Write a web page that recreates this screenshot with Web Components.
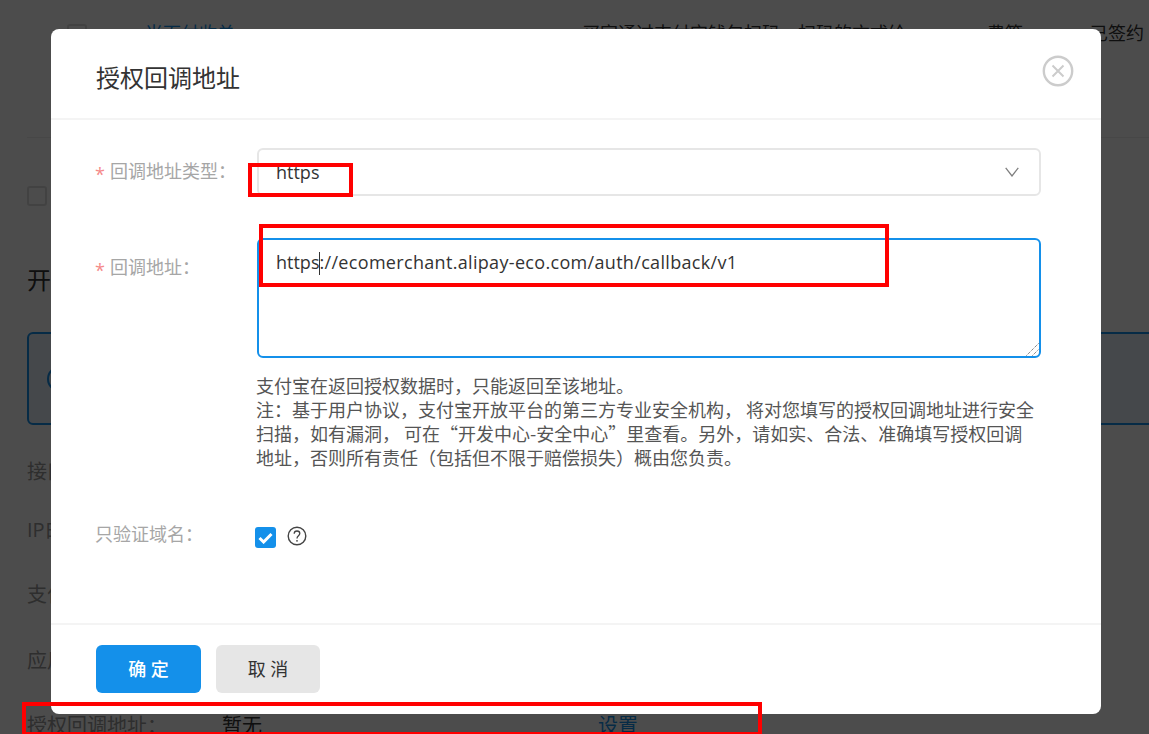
<!DOCTYPE html>
<html lang="zh">
<head>
<meta charset="utf-8">
<title>授权回调地址</title>
<style>
    html, body { margin: 0; height: 100%; overflow: hidden; background: #fff; }
    body { font: 18px/24px "Open Sans", "Noto Sans CJK SC", sans-serif; color: #333; }
</style>
</head>
<body>

<x-page>
    <x-order-row></x-order-row>
    <x-page-head></x-page-head>
    <x-data-row top="35" label="接口加签方式："></x-data-row>
    <x-data-row top="34" label="IP白名单："></x-data-row>
    <x-data-row top="41" label="支付宝网关地址："></x-data-row>
    <x-data-row top="42" label="应用网关地址："></x-data-row>
    <x-data-row top="41" label="授权回调地址：" value="暂无" action="设置"></x-data-row>
</x-page>

<x-modal heading="授权回调地址">
    <x-form-item label="回调地址类型：" required height="48">
        <x-select>https</x-select>
    </x-form-item>
    <x-form-item label="回调地址：" required offset="17" gap="42">
        <x-text-box caret="5">https://ecomerchant.alipay-eco.com/auth/callback/v1</x-text-box>
        <x-hint>支付宝在返回授权数据时，只能返回至该地址。<br>注：基于用户协议，支付宝开放平台的第三方专业安全机构， 将对您填写的授权回调地址进行安全扫描，如有漏洞， 可在“开发中心-安全中心”里查看。另外，请如实、合法、准确填写授权回调地址，否则所有责任（包括但不限于赔偿损失）概由您负责。</x-hint>
    </x-form-item>
    <x-form-item label="只验证域名：" offset="0" gap="53">
        <x-check-help></x-check-help>
    </x-form-item>
    <x-button slot="footer" kind="primary">确 定</x-button>
    <x-button slot="footer">取 消</x-button>
</x-modal>

<x-mark style="left:248px;top:163px;width:105px;height:34px"></x-mark>
<x-mark style="left:259px;top:224px;width:630px;height:63px"></x-mark>
<x-mark style="left:22px;top:702px;width:740px;height:34px"></x-mark>

<script>
class Page extends HTMLElement {
    constructor() {
        super();
        this.attachShadow({ mode: 'open' }).innerHTML = `<style>
            :host { display: block; height: 734px; padding: 0 0 0 27px; box-sizing: border-box; overflow: hidden; }
        </style><slot></slot>`;
    }
}

class OrderRow extends HTMLElement {
    constructor() {
        super();
        this.attachShadow({ mode: 'open' }).innerHTML = `<style>
            :host { display: block; height: 138px; box-sizing: border-box; padding-top: 21px; border-bottom: 1px solid #eee; }
            .row { display: flex; line-height: 24px; white-space: nowrap; color: #333; }
            .box { width: 20px; height: 20px; margin: 3px 58px 0 40px; box-sizing: border-box; border: 2px solid #ddd; border-radius: 3px; }
            .name { width: 437px; color: #1490ea; }
            .desc { width: 405px; }
            .fee { width: 103px; }
        </style>
        <div class="row">
            <div class="box"></div>
            <div class="name">当面付收单</div>
            <div class="desc">买家通过支付宝钱包扫码，扫码的方式给</div>
            <div class="fee">费等</div>
            <div>已签约</div>
        </div>`;
    }
}

class PageHead extends HTMLElement {
    constructor() {
        super();
        this.attachShadow({ mode: 'open' }).innerHTML = `<style>
            :host { display: block; padding-top: 48px; }
            .box { width: 20px; height: 20px; box-sizing: border-box; border: 2px solid #ddd; border-radius: 3px; }
            h2 { margin: 58px 0 0; font: inherit; font-size: 24px; line-height: 32px; color: #333; }
            .info { display: flex; align-items: center; width: 1180px; height: 93px; margin-top: 36px; padding-left: 18px; box-sizing: border-box; background: #e6f0fa; border: 2px solid #1490ea; border-radius: 6px; }
            .dot { width: 26px; height: 26px; box-sizing: border-box; border: 2px solid #1490ea; border-radius: 50%; }
        </style>
        <div class="box"></div>
        <h2>开发信息</h2>
        <div class="info"><div class="dot"></div></div>`;
    }
}

class DataRow extends HTMLElement {
    constructor() {
        super();
        this.attachShadow({ mode: 'open' }).innerHTML = `<style>
            :host { display: block; }
            .row { display: flex; font-size: 20px; line-height: 24px; white-space: nowrap; color: #999; }
            .label { width: 195px; }
            .value { width: 376px; color: #333; }
            .action { color: #1490ea; }
        </style>
        <div class="row">
            <div class="label">${this.getAttribute('label')}</div>
            <div class="value">${this.getAttribute('value') || ''}</div>
            <div class="action">${this.getAttribute('action') || ''}</div>
        </div>`;
        this.style.marginTop = this.getAttribute('top') + 'px';
    }
}

class Modal extends HTMLElement {
    constructor() {
        super();
        this.attachShadow({ mode: 'open' }).innerHTML = `<style>
            :host { display: block; position: absolute; inset: 0; background: rgba(0, 0, 0, .7); }
            .dialog { position: absolute; left: 51px; top: 29px; width: 1050px; height: 685px; display: flex; flex-direction: column; background: #fff; border-radius: 8px; overflow: hidden; }
            header { flex: none; height: 89px; box-sizing: content-box; display: flex; align-items: center; justify-content: space-between; padding: 0 27px 0 45px; border-bottom: 2px solid #f4f4f4; }
            h1 { margin: 0; font: inherit; font-size: 24px; line-height: 32px; color: #333; position: relative; top: 4px; }
            .close { width: 32px; height: 32px; position: relative; top: -3px; }
            main { flex: 1; padding: 28px 60px 0 44px; }
            footer { flex: none; height: 91px; display: flex; align-items: flex-start; gap: 15px; padding: 20px 0 0 45px; box-sizing: border-box; border-top: 2px solid #f4f4f4; }
        </style>
        <div class="dialog">
            <header>
                <h1>${this.getAttribute('heading')}</h1>
                <svg class="close" viewBox="0 0 32 32" fill="none" stroke="#ccc">
                    <circle cx="16" cy="16" r="14.2" stroke-width="2.4"/>
                    <path d="M10.5 10.5 21.5 21.5M21.5 10.5 10.5 21.5" stroke-width="2"/>
                </svg>
            </header>
            <main><slot></slot></main>
            <footer><slot name="footer"></slot></footer>
        </div>`;
    }
}

class FormItem extends HTMLElement {
    constructor() {
        super();
        const star = this.hasAttribute('required') ? '<span class="star">*</span>' : '';
        const height = this.getAttribute('height');
        const offset = this.getAttribute('offset') || 0;
        this.attachShadow({ mode: 'open' }).innerHTML = `<style>
            :host { display: grid; grid-template-columns: 162px 784px; margin-top: ${this.getAttribute('gap') || 0}px; }
            .label { color: #a6a6a6; white-space: nowrap; line-height: ${height ? Number(height) - 2 : 24}px; padding-top: ${offset}px; }
            .star { display: inline-block; width: 15px; color: #f58a8a; position: relative; top: 3px; }
        </style>
        <div class="label">${star}${this.getAttribute('label')}</div>
        <div><slot></slot></div>`;
    }
}

class Select extends HTMLElement {
    constructor() {
        super();
        this.attachShadow({ mode: 'open' }).innerHTML = `<style>
            :host { display: flex; align-items: center; justify-content: space-between; height: 48px; padding: 0 20px 0 17px; box-sizing: border-box; border: 2px solid #e6e6e6; border-radius: 6px; color: #333; }
            svg { width: 14px; height: 10px; }
        </style>
        <slot></slot>
        <svg viewBox="0 0 14 10" fill="none" stroke="#808080" stroke-width="1.3"><path d="M.7.8 7 9 13.3.8"/></svg>`;
    }
}

class TextBox extends HTMLElement {
    constructor() {
        super();
        const value = this.textContent;
        const at = Number(this.getAttribute('caret'));
        this.attachShadow({ mode: 'open' }).innerHTML = `<style>
            :host { display: block; position: relative; height: 120px; padding: 10px 17px; box-sizing: border-box; border: 2px solid #1490ea; border-radius: 6px; color: #333; }
            .caret { display: inline-block; width: 0; height: 23px; vertical-align: -6px; border-left: 1px solid #333; margin-right: -1px; }
            .rest { letter-spacing: .32px; }
            svg { position: absolute; right: 0; bottom: 0; width: 13px; height: 13px; }
        </style>
        <div>${value.slice(0, at)}<span class="caret"></span><span class="rest">${value.slice(at)}</span></div>
        <svg viewBox="0 0 13 13" fill="none" stroke="#555" stroke-dasharray="1 1"><path d="M.5 12.5 12.5.5M6.5 12.5 12.5 6.5"/></svg>`;
    }
}

class Hint extends HTMLElement {
    constructor() {
        super();
        this.attachShadow({ mode: 'open' }).innerHTML = `<style>
            :host { display: block; margin: 15px 0 0 -1px; padding-right: 5px; font-family: "Noto Sans CJK SC", sans-serif; line-height: 24px; color: #555; }
        </style><slot></slot>`;
    }
}

class CheckHelp extends HTMLElement {
    constructor() {
        super();
        this.attachShadow({ mode: 'open' }).innerHTML = `<style>
            :host { display: flex; align-items: center; gap: 11px; margin: 5px 0 0 -2px; }
            .box { width: 21px; height: 21px; display: flex; align-items: center; justify-content: center; background: #1490ea; border-radius: 3px; }
            .box svg { width: 15px; height: 12px; }
            .help { width: 20px; height: 20px; margin-top: -3px; }
        </style>
        <div class="box"><svg viewBox="0 0 15 12" fill="none" stroke="#fff" stroke-width="3"><path d="M1.5 6 5.6 10 13.5 2"/></svg></div>
        <svg class="help" viewBox="0 0 20 20" fill="none" stroke="#444">
            <circle cx="10" cy="10" r="8.8" stroke-width="1.4"/>
            <path d="M7.2 7.8C7.2 6 8.5 5 10 5S12.8 6 12.8 7.6C12.8 9.7 10 9.9 10 12.4" stroke-width="1.3"/>
            <circle cx="10" cy="14.8" r=".9" fill="#444" stroke="none"/>
        </svg>`;
    }
}

class Button extends HTMLElement {
    constructor() {
        super();
        const primary = this.getAttribute('kind') === 'primary';
        this.attachShadow({ mode: 'open' }).innerHTML = `<style>
            :host { display: flex; align-items: center; justify-content: center; height: 48px; width: ${primary ? 105 : 104}px; border-radius: 6px; white-space: pre; background: ${primary ? '#1490ea' : '#e6e6e6'}; color: ${primary ? '#fff' : '#333'}; font-weight: ${primary ? 500 : 400}; }
        </style><slot></slot>`;
    }
}

// red annotation frames drawn on top of the screenshot
class Mark extends HTMLElement {
    constructor() {
        super();
        this.attachShadow({ mode: 'open' }).innerHTML = `<style>
            :host { display: block; position: absolute; box-sizing: border-box; border: 4px solid #f00; }
        </style>`;
    }
}

customElements.define('x-page', Page);
customElements.define('x-order-row', OrderRow);
customElements.define('x-page-head', PageHead);
customElements.define('x-data-row', DataRow);
customElements.define('x-modal', Modal);
customElements.define('x-form-item', FormItem);
customElements.define('x-select', Select);
customElements.define('x-text-box', TextBox);
customElements.define('x-hint', Hint);
customElements.define('x-check-help', CheckHelp);
customElements.define('x-button', Button);
customElements.define('x-mark', Mark);
</script>
</body>
</html>
